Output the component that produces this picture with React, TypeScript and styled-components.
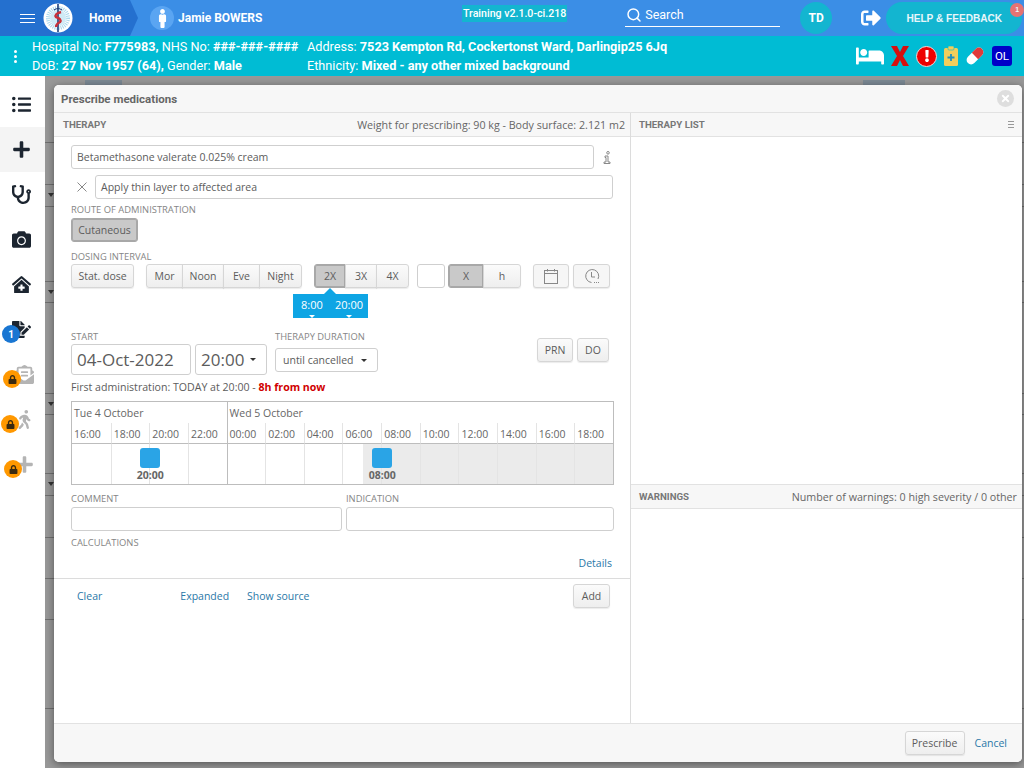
import { createGlobalStyle, styled } from "styled-components";
import { Search } from "lucide-react";
import {
  FaBed,
  FaCamera,
  FaClinicMedical,
  FaEnvelopeOpenText,
  FaExclamation,
  FaFileSignature,
  FaLock,
  FaListUl,
  FaMale,
  FaPlus,
  FaSignOutAlt,
  FaStethoscope,
  FaTimes,
  FaWalking,
} from "react-icons/fa";

const GlobalStyle = createGlobalStyle`
  html, body { margin: 0; padding: 0; }
  body { font-family: "Open Sans", "Liberation Sans", sans-serif; }
  * { box-sizing: border-box; }
`;

const Page = styled.div`
  width: 1024px;
  height: 768px;
  display: flex;
  flex-direction: column;
  overflow: hidden;
`;

const Header = styled.header`
  height: 36px;
  flex: none;
  display: flex;
  align-items: center;
  background: #3b8ee6;
  color: #fff;
  font-family: Roboto, sans-serif;
`;

const HomeCrumb = styled.div`
  height: 36px;
  width: 138px;
  flex: none;
  display: flex;
  align-items: center;
  padding-left: 20px;
  background: #2470cf;
  clip-path: polygon(0 0, 130px 0, 138px 18px, 130px 36px, 0 36px);
  font-size: 12px;
  font-weight: 700;
`;

const Burger = styled.div`
  width: 15px;
  height: 9px;
  flex: none;
  border-top: 1px solid #fff;
  border-bottom: 1px solid #fff;
  position: relative;
  margin-right: 8px;
  &::after {
    content: "";
    position: absolute;
    left: 0;
    right: 0;
    top: 3px;
    border-top: 1px solid #fff;
  }
`;

const HomeLabel = styled.span`
  margin-left: 16px;
`;

const Avatar = styled.div`
  width: 24px;
  height: 24px;
  margin-left: 12px;
  border-radius: 50%;
  background: #5aa5f2;
  display: flex;
  align-items: center;
  justify-content: center;
  font-size: 19px;
`;

const PatientName = styled.div`
  width: 284px;
  margin-left: 4px;
  font-size: 12px;
  font-weight: 700;
`;

const TrainingTag = styled.span`
  align-self: flex-start;
  margin-top: 5px;
  padding: 0 1px;
  background: #13b5d0;
  font-size: 10.6px;
  line-height: 17px;
  font-weight: 500;
`;

const SearchBox = styled.div`
  width: 155px;
  height: 23px;
  margin: 0 0 6px 58px;
  display: flex;
  align-items: center;
  gap: 3px;
  padding-left: 1px;
  border-bottom: 1px solid #fff;
  font-size: 12.5px;
`;

const UserBadge = styled.div`
  width: 32px;
  height: 32px;
  margin-left: 20px;
  border-radius: 50%;
  background: #13b5d0;
  display: flex;
  align-items: center;
  justify-content: center;
  font-size: 12px;
  font-weight: 700;
`;

const LogoutIcon = styled.div`
  margin-left: 29px;
  display: flex;
  font-size: 20px;
`;

const HelpButton = styled.div`
  width: 136px;
  height: 32px;
  margin-left: 5px;
  flex: none;
  position: relative;
  border-radius: 16px;
  background: #13b5d0;
  display: flex;
  align-items: center;
  justify-content: center;
  color: #e8f6fa;
  font-family: "Liberation Sans", sans-serif;
  font-size: 10.1px;
  font-weight: 700;
`;

const HelpCount = styled.span`
  position: absolute;
  top: 1px;
  right: -2px;
  width: 14px;
  height: 14px;
  border-radius: 50%;
  background: #e57373;
  font-size: 7px;
  line-height: 14px;
  text-align: center;
`;

const PatientBar = styled.div`
  height: 40px;
  flex: none;
  display: flex;
  align-items: center;
  background: #00bcd4;
  color: #fff;
  font-family: Roboto, sans-serif;
  font-size: 12.7px;
  line-height: 19px;
`;

const DotsButton = styled.div`
  width: 32px;
  flex: none;
  display: flex;
  flex-direction: column;
  align-items: center;
  gap: 2px;
  padding-right: 2px;
`;

const Dot = styled.span`
  width: 3px;
  height: 3px;
  border-radius: 50%;
  background: #fff;
`;

const InfoColumn = styled.div<{ $width: number }>`
  width: ${({ $width }) => $width}px;
  flex: none;
  white-space: nowrap;
  b { font-weight: 700; }
`;

const StatusIcons = styled.div`
  margin-left: auto;
  padding-right: 12px;
  display: flex;
  align-items: center;
  gap: 7px;
`;

const BedIcon = styled(FaBed)`
  width: 28px;
  height: 24px;
`;

const AlertDot = styled.span`
  width: 21px;
  height: 21px;
  border-radius: 50%;
  background: #ee0000;
  border: 1px solid #f3d7d7;
  display: flex;
  align-items: center;
  justify-content: center;
  font-size: 12px;
`;

const OlBadge = styled.span`
  width: 20px;
  height: 20px;
  border-radius: 3px;
  background: #0000c8;
  font-size: 11.5px;
  line-height: 20px;
  text-align: center;
`;

const Main = styled.div`
  flex: 1;
  display: flex;
  min-height: 0;
`;

const Sidebar = styled.nav`
  width: 45px;
  flex: none;
  display: flex;
  flex-direction: column;
  padding-top: 6px;
  background: #fff;
  color: #1c2530;
`;

const SideItem = styled.div<{ $active?: boolean; $dim?: boolean }>`
  height: 45px;
  flex: none;
  position: relative;
  display: flex;
  align-items: center;
  justify-content: center;
  padding-right: 3px;
  font-size: 19px;
  background: ${({ $active }) => ($active ? "#f4f4f4" : "transparent")};
  color: ${({ $dim }) => ($dim ? "#b4b4b4" : "#1c2530")};
`;

const DimIcon = styled.span`
  display: flex;
  margin-left: 7px;
`;

const SideBadge = styled.span<{ $left: number; $lock?: boolean }>`
  position: absolute;
  left: ${({ $left }) => $left}px;
  top: 18px;
  width: 18px;
  height: 18px;
  border-radius: 50%;
  background: ${({ $lock }) => ($lock ? "#ff9800" : "#1976d2")};
  color: ${({ $lock }) => ($lock ? "#3a2a10" : "#fff")};
  display: flex;
  align-items: center;
  justify-content: center;
  font-family: Roboto, sans-serif;
  font-size: ${({ $lock }) => ($lock ? 9 : 10)}px;
  font-weight: 700;
`;

const Backdrop = styled.div`
  flex: 1;
  position: relative;
  background: #989898;
  padding-top: 4px;
`;

const GhostTabs = styled.div`
  height: 57px;
  display: flex;
  align-items: flex-start;
`;

const GhostTab = styled.span<{ $left: number; $width: number }>`
  width: ${({ $width }) => $width}px;
  height: 12px;
  margin-left: ${({ $left }) => $left}px;
  background: #7c8994;
`;

const GhostRow = styled.div<{ $height: number; $caret?: boolean }>`
  height: ${({ $height }) => $height}px;
  border-bottom: 1px solid #6f6f6f;
  position: relative;
  &::after {
    content: "";
    display: ${({ $caret }) => ($caret ? "block" : "none")};
    position: absolute;
    left: 3px;
    bottom: -16px;
    border: 3px solid transparent;
    border-top: 4px solid #333;
  }
`;

const Modal = styled.section`
  position: absolute;
  left: 9px;
  top: 9px;
  right: 2px;
  bottom: 6px;
  display: flex;
  flex-direction: column;
  border-radius: 5px;
  background: #fff;
  box-shadow: 0 2px 8px rgba(0, 0, 0, 0.45);
  color: #5c5c5c;
  font-size: 11px;
  overflow: hidden;
`;

const ModalTitle = styled.div`
  height: 28px;
  flex: none;
  display: flex;
  align-items: center;
  justify-content: space-between;
  padding: 0 8px 0 7px;
  background: #f7f7f7;
  border-bottom: 1px solid #e2e2e2;
  font-family: Roboto, sans-serif;
  font-size: 11.5px;
  font-weight: 700;
  color: #666;
`;

const CloseDot = styled.span`
  width: 17px;
  height: 17px;
  border-radius: 50%;
  background: #dedede;
  color: #fff;
  display: flex;
  align-items: center;
  justify-content: center;
  font-size: 11px;
`;

const ModalBody = styled.div`
  flex: 1;
  min-height: 0;
  display: grid;
  grid-template-columns: 577px 1fr;
`;

const LeftPane = styled.div`
  border-right: 1px solid #dcdcdc;
  display: flex;
  flex-direction: column;
`;

const RightPane = styled.div`
  display: flex;
  flex-direction: column;
`;

const PaneHeader = styled.div`
  height: 24px;
  flex: none;
  display: flex;
  align-items: center;
  justify-content: space-between;
  padding: 0 5px 0 8px;
  background: #f7f7f7;
  border-bottom: 1px solid #e2e2e2;
  font-size: 10.7px;
  color: #666;
`;

const TherapyHeader = styled(PaneHeader)`
  padding-left: 9px;
`;

const PaneTitle = styled.span`
  font-family: Roboto, sans-serif;
  font-size: 9.7px;
  font-weight: 700;
  color: #777;
`;

const Lines = styled.span`
  width: 6px;
  height: 7px;
  margin-right: 3px;
  border-top: 1px solid #999;
  border-bottom: 1px solid #999;
  position: relative;
  &::after {
    content: "";
    position: absolute;
    left: 0;
    right: 0;
    top: 2px;
    border-top: 1px solid #999;
  }
`;

const ListArea = styled.div`
  height: 347px;
  flex: none;
`;

const WarnHeader = styled(PaneHeader)`
  border-top: 1px solid #e2e2e2;
  height: 25px;
`;

const Form = styled.div`
  padding: 8px 17px 0 17px;
  display: flex;
  flex-direction: column;
`;

const Row = styled.div<{ $gap?: number; $top?: number }>`
  display: flex;
  align-items: flex-start;
  gap: ${({ $gap }) => $gap ?? 0}px;
  margin-top: ${({ $top }) => $top ?? 0}px;
`;

const TextField = styled.div<{ $width?: number }>`
  height: 24px;
  width: ${({ $width }) => ($width ? `${$width}px` : "auto")};
  flex: ${({ $width }) => ($width ? "none" : "1")};
  padding: 0 5px;
  border: 1px solid #cfcfcf;
  border-radius: 3px;
  background: #fff;
  font-size: 10.5px;
  line-height: 22px;
  color: #5c5c5c;
`;

const IconSlot = styled.span<{ $width: number; $end?: boolean }>`
  width: ${({ $width }) => $width}px;
  height: 24px;
  flex: none;
  display: flex;
  align-items: center;
  justify-content: ${({ $end }) => ($end ? "flex-end" : "flex-start")};
  padding: ${({ $end }) => ($end ? "0 2px 0 0" : "0 0 0 6px")};
  color: #888;
`;

const Caption = styled.div<{ $top?: number }>`
  margin-top: ${({ $top }) => $top ?? 0}px;
  font-size: 9.4px;
  line-height: 12px;
  color: #858585;
  white-space: nowrap;
`;

const FieldCaption = styled(Caption)`
  margin-bottom: 2px;
`;

const Btn = styled.button<{ $width?: number; $on?: boolean; $flat?: boolean }>`
  height: 24px;
  width: ${({ $width }) => ($width ? `${$width}px` : "auto")};
  flex: none;
  padding: 0;
  border: 1px solid ${({ $on }) => ($on ? "#a8a8a8" : "#d6d6d6")};
  border-radius: 3px;
  background: ${({ $on, $flat }) =>
    $on
      ? "#c9c9c9"
      : $flat
        ? "#f6f6f6"
        : "linear-gradient(#fbfbfb, #eeeeee)"};
  box-shadow: ${({ $on }) => ($on ? "inset 0 0 0 1px #a8a8a8" : "0 1px 1px rgba(0,0,0,0.08)")};
  color: #5c5c5c;
  font-family: inherit;
  font-size: 10.5px;
  display: flex;
  align-items: center;
  justify-content: center;
`;

const BtnGroup = styled.div`
  display: flex;
  flex: none;
  button {
    border-radius: 0;
    margin-left: -1px;
  }
  button:first-child {
    border-radius: 3px 0 0 3px;
    margin-left: 0;
  }
  button:last-child {
    border-radius: 0 3px 3px 0;
  }
`;

const TimePopupRow = styled.div`
  height: 30px;
  padding-left: 222px;
  display: flex;
  align-items: flex-end;
`;

const TimePopup = styled.div`
  width: 75px;
  height: 24px;
  position: relative;
  display: flex;
  justify-content: space-between;
  padding: 0 5px 0 8px;
  background: #0ea5e4;
  color: #fff;
  font-size: 11px;
  line-height: 22px;
  &::before {
    content: "";
    position: absolute;
    left: 31px;
    top: -6px;
    border-left: 6px solid transparent;
    border-right: 6px solid transparent;
    border-bottom: 6px solid #0ea5e4;
  }
`;

const PopupTime = styled.span`
  position: relative;
  &::after {
    content: "";
    position: absolute;
    left: 50%;
    bottom: 0;
    margin-left: -3px;
    border-left: 3px solid transparent;
    border-right: 3px solid transparent;
    border-top: 3px solid #fff;
  }
`;

const StartRow = styled.div`
  margin-top: 13px;
  height: 45px;
  display: flex;
  align-items: flex-start;
`;

const Field = styled.div<{ $left?: number }>`
  margin-left: ${({ $left }) => $left ?? 0}px;
  display: flex;
  flex-direction: column;
  flex: none;
`;

const BigField = styled.div<{ $width: number }>`
  width: ${({ $width }) => $width}px;
  height: 31px;
  margin-top: 1px;
  padding-left: 5px;
  display: flex;
  align-items: center;
  gap: 6px;
  border: 1px solid #cfcfcf;
  border-radius: 3px;
  font-size: 17px;
  color: #5c5c5c;
`;

const SmallCaret = styled.span`
  border-left: 3px solid transparent;
  border-right: 3px solid transparent;
  border-top: 3px solid #333;
`;

const DurationSelect = styled.div`
  width: 103px;
  height: 24px;
  margin-top: 5px;
  padding-left: 7px;
  display: flex;
  align-items: center;
  gap: 7px;
  border: 1px solid #cfcfcf;
  border-radius: 3px;
  font-size: 10.5px;
`;

const RightButtons = styled.div`
  margin: 7px 4px 0 auto;
  display: flex;
  gap: 4px;
`;

const FirstDose = styled.div`
  margin-top: 4px;
  font-size: 10.6px;
  line-height: 14px;
  b { color: #d00000; }
`;

const Timeline = styled.div`
  margin-top: 7px;
  width: 543px;
  height: 84px;
  flex: none;
  border: 1px solid #bdbdbd;
  display: grid;
  grid-template-columns: repeat(14, 1fr);
  grid-template-rows: 21px 21px 1fr;
  font-size: 10.5px;
  color: #666;
`;

const DayCell = styled.div<{ $span: number }>`
  grid-column: span ${({ $span }) => $span};
  padding: 4px 0 0 2px;
  line-height: 14px;
  & + & { border-left: 1px solid #bdbdbd; }
`;

const HourCell = styled.div<{ $first?: boolean }>`
  padding-left: 2px;
  line-height: 23px;
  white-space: nowrap;
  border-bottom: 1px solid #bdbdbd;
  border-left: 1px solid ${({ $first }) => ($first ? "#bdbdbd" : "#e4e4e4")};
  &:nth-of-type(3) { border-left: 0; }
`;

const SlotCell = styled.div<{ $shade?: "half" | "full"; $first?: boolean }>`
  position: relative;
  border-left: 1px solid ${({ $first }) => ($first ? "#bdbdbd" : "#e4e4e4")};
  &:nth-of-type(17) { border-left: 0; }
  background: ${({ $shade }) =>
    $shade === "full"
      ? "#ebebeb"
      : $shade === "half"
        ? "linear-gradient(90deg, transparent 52%, #ebebeb 52%)"
        : "transparent"};
`;

const Dose = styled.div`
  position: absolute;
  left: 0;
  top: 4px;
  width: 40px;
  margin-left: -20px;
  display: flex;
  flex-direction: column;
  align-items: center;
  z-index: 1;
  font-size: 10.5px;
  line-height: 14px;
  font-weight: 700;
  color: #666;
`;

const DoseBlock = styled.span`
  width: 20px;
  height: 20px;
  border-radius: 3px;
  background: #2aa4e6;
`;

const DetailsRow = styled.div`
  margin-top: 7px;
  padding-right: 1px;
  line-height: 14px;
  text-align: right;
`;

const Link = styled.a`
  color: #2a78a8;
  font-size: 10.5px;
  white-space: nowrap;
`;

const ActionBar = styled.div`
  margin-top: 8px;
  height: 38px;
  padding: 0 20px 3px 23px;
  border-top: 1px solid #dcdcdc;
  display: flex;
  align-items: center;
`;

const AddWrap = styled.div`
  margin-left: auto;
`;

const Footer = styled.div`
  height: 39px;
  flex: none;
  display: flex;
  align-items: center;
  justify-content: flex-end;
  gap: 10px;
  padding-right: 15px;
  background: #f7f7f7;
  border-top: 1px solid #e2e2e2;
`;

const Spacer = styled.span<{ $width: number }>`
  width: ${({ $width }) => $width}px;
  flex: none;
`;

const days = [
  { label: "Tue 4 October", span: 4 },
  { label: "Wed 5 October", span: 10 },
];
const hours = ["16:00", "18:00", "20:00", "22:00", "00:00", "02:00", "04:00", "06:00", "08:00", "10:00", "12:00", "14:00", "16:00", "18:00"];
const ghostRows = [
  { height: 6 },
  { height: 42, caret: true },
  { height: 22 },
  { height: 75, caret: true },
  { height: 21 },
  { height: 91, caret: true },
  { height: 21 },
  { height: 59, caret: true },
  { height: 22 },
  { height: 42 },
  { height: 41 },
  { height: 41 },
  { height: 89 },
];

const Logo = () => (
  <svg width="30" height="30" viewBox="0 0 30 30">
    <circle cx="15" cy="15" r="14.5" fill="#fff" />
    <circle cx="15" cy="15" r="10" fill="none" stroke="#a9d8ec" strokeWidth="4" strokeDasharray="1 1" />
    <circle cx="15" cy="15" r="8" fill="#cfeaf5" />
    <path d="M15 1V29" stroke="#1e3f7a" strokeWidth="1.6" />
    <path d="M11 7Q15 4 19 7" stroke="#1e3f7a" strokeWidth="1.2" fill="none" />
    <path d="M18 9Q11 11 13 14Q19 16 17 19Q13 21 13 24" stroke="#c8313a" strokeWidth="2.4" fill="none" />
  </svg>
);

const HeavyX = () => (
  <svg width="18" height="20" viewBox="0 0 18 20">
    <path d="M0 0H6L9 6L12 0H18L12 10L18 20H12L9 14L6 20H0L6 10Z" fill="#d50f0f" />
  </svg>
);

const ClipboardPlus = () => (
  <svg width="14" height="20" viewBox="0 0 14 20">
    <rect x="0" y="2" width="14" height="18" rx="1.5" fill="#f2ce5c" />
    <rect x="4" y="0" width="6" height="4" rx="1" fill="#f2ce5c" stroke="#00bcd4" strokeWidth="0.6" />
    <path d="M7 8V15M3.5 11.5H10.5" stroke="#1f8fc0" strokeWidth="1.8" />
  </svg>
);

const Capsule = () => (
  <svg width="20" height="20" viewBox="0 0 20 20">
    <g transform="rotate(-45 10 10)">
      <rect x="0" y="5.5" width="20" height="9" rx="4.5" fill="#fff" />
      <path d="M10 5.5H15.5A4.5 4.5 0 0 1 15.5 14.5H10Z" fill="#e03a3a" />
    </g>
  </svg>
);

const CalendarGlyph = () => (
  <svg width="16" height="16" viewBox="0 0 16 16" fill="none" stroke="#888">
    <rect x="1.5" y="2.5" width="13" height="13" />
    <path d="M1.5 5.5H14.5M4.5 1V3.5M11.5 1V3.5" />
  </svg>
);

const ClockGlyph = () => (
  <svg width="16" height="16" viewBox="0 0 16 16" fill="none" stroke="#888">
    <path d="M14 11A6.5 6.5 0 1 0 7.5 14.5" />
    <path d="M7.5 4V9H11" />
    <path d="M10 14.5H15" strokeDasharray="1 1" />
  </svg>
);

const InfoGlyph = () => (
  <svg width="8" height="13" viewBox="0 0 8 13" fill="none" stroke="#888">
    <circle cx="5" cy="1.8" r="1.3" />
    <path d="M2 5H5V11H7V12.5H1V11H3V6.5H2Z" />
  </svg>
);

const CrossGlyph = () => (
  <svg width="10" height="10" viewBox="0 0 10 10" stroke="#888" strokeWidth="1">
    <path d="M0.5 0.5L9.5 9.5M9.5 0.5L0.5 9.5" />
  </svg>
);

export default function App() {
  return (
    <Page>
      <GlobalStyle />
      <Header>
        <HomeCrumb>
          <Burger />
          <Logo />
          <HomeLabel>Home</HomeLabel>
        </HomeCrumb>
        <Avatar>
          <FaMale />
        </Avatar>
        <PatientName>Jamie BOWERS</PatientName>
        <TrainingTag>Training v2.1.0-ci.218</TrainingTag>
        <SearchBox>
          <Search size={16} strokeWidth={2.2} />
          Search
        </SearchBox>
        <UserBadge>TD</UserBadge>
        <LogoutIcon>
          <FaSignOutAlt />
        </LogoutIcon>
        <HelpButton>
          HELP &amp; FEEDBACK
          <HelpCount>1</HelpCount>
        </HelpButton>
      </Header>

      <PatientBar>
        <DotsButton>
          <Dot />
          <Dot />
          <Dot />
        </DotsButton>
        <InfoColumn $width={275}>
          Hospital No: <b>F775983,</b> NHS No: <b>###-###-####</b>
          <br />
          DoB: <b>27 Nov 1957 (64),</b> Gender: <b>Male</b>
        </InfoColumn>
        <InfoColumn $width={400}>
          Address: <b>7523 Kempton Rd, Cockertonst Ward, Darlingip25 6Jq</b>
          <br />
          Ethnicity: <b>Mixed - any other mixed background</b>
        </InfoColumn>
        <StatusIcons>
          <BedIcon />
          <HeavyX />
          <AlertDot>
            <FaExclamation />
          </AlertDot>
          <ClipboardPlus />
          <Capsule />
          <OlBadge>OL</OlBadge>
        </StatusIcons>
      </PatientBar>

      <Main>
        <Sidebar>
          <SideItem>
            <FaListUl />
          </SideItem>
          <SideItem $active>
            <FaPlus />
          </SideItem>
          <SideItem>
            <FaStethoscope />
          </SideItem>
          <SideItem>
            <FaCamera />
          </SideItem>
          <SideItem>
            <FaClinicMedical />
          </SideItem>
          <SideItem>
            <FaFileSignature />
            <SideBadge $left={2}>1</SideBadge>
          </SideItem>
          <SideItem $dim>
            <DimIcon>
              <FaEnvelopeOpenText />
            </DimIcon>
            <SideBadge $left={3} $lock>
              <FaLock />
            </SideBadge>
          </SideItem>
          <SideItem $dim>
            <DimIcon>
              <FaWalking />
            </DimIcon>
            <SideBadge $left={1} $lock>
              <FaLock />
            </SideBadge>
          </SideItem>
          <SideItem $dim>
            <DimIcon>
              <FaPlus />
            </DimIcon>
            <SideBadge $left={4} $lock>
              <FaLock />
            </SideBadge>
          </SideItem>
        </Sidebar>

        <Backdrop>
          <GhostTabs>
            <GhostTab $left={40} $width={37} />
            <GhostTab $left={741} $width={42} />
          </GhostTabs>
          {ghostRows.map((row, i) => (
            <GhostRow key={i} $height={row.height} $caret={row.caret} />
          ))}

          <Modal>
            <ModalTitle>
              Prescribe medications
              <CloseDot>
                <FaTimes />
              </CloseDot>
            </ModalTitle>
            <ModalBody>
              <LeftPane>
                <TherapyHeader>
                  <PaneTitle>THERAPY</PaneTitle>
                  Weight for prescribing: 90 kg - Body surface: 2.121 m2
                </TherapyHeader>
                <Form>
                  <Row>
                    <TextField>Betamethasone valerate 0.025% cream</TextField>
                    <IconSlot $width={19} $end>
                      <InfoGlyph />
                    </IconSlot>
                  </Row>
                  <Row $top={6}>
                    <IconSlot $width={24}>
                      <CrossGlyph />
                    </IconSlot>
                    <TextField>Apply thin layer to affected area</TextField>
                  </Row>
                  <Caption $top={5}>ROUTE OF ADMINISTRATION</Caption>
                  <Row $top={2}>
                    <Btn $on $width={67}>Cutaneous</Btn>
                  </Row>
                  <Caption $top={9}>DOSING INTERVAL</Caption>
                  <Row $top={1}>
                    <Btn $width={63}>Stat. dose</Btn>
                    <Spacer $width={12} />
                    <BtnGroup>
                      <Btn $width={37}>Mor</Btn>
                      <Btn $width={42}>Noon</Btn>
                      <Btn $width={37}>Eve</Btn>
                      <Btn $width={43}>Night</Btn>
                    </BtnGroup>
                    <Spacer $width={12} />
                    <BtnGroup>
                      <Btn $on $width={32}>2X</Btn>
                      <Btn $width={32}>3X</Btn>
                      <Btn $width={33}>4X</Btn>
                    </BtnGroup>
                    <Spacer $width={8} />
                    <TextField $width={28} />
                    <Spacer $width={3} />
                    <BtnGroup>
                      <Btn $on $width={36}>X</Btn>
                      <Btn $width={38}>h</Btn>
                    </BtnGroup>
                    <Spacer $width={12} />
                    <Btn $flat $width={36}>
                      <CalendarGlyph />
                    </Btn>
                    <Spacer $width={4} />
                    <Btn $flat $width={37}>
                      <ClockGlyph />
                    </Btn>
                  </Row>
                  <TimePopupRow>
                    <TimePopup>
                      <PopupTime>8:00</PopupTime>
                      <PopupTime>20:00</PopupTime>
                    </TimePopup>
                  </TimePopupRow>
                  <StartRow>
                    <Field>
                      <Caption>START</Caption>
                      <BigField $width={120}>04-Oct-2022</BigField>
                    </Field>
                    <Field $left={4}>
                      <Caption>&nbsp;</Caption>
                      <BigField $width={72}>
                        20:00 <SmallCaret />
                      </BigField>
                    </Field>
                    <Field $left={8}>
                      <Caption>THERAPY DURATION</Caption>
                      <DurationSelect>
                        until cancelled <SmallCaret />
                      </DurationSelect>
                    </Field>
                    <RightButtons>
                      <Btn $width={36}>PRN</Btn>
                      <Btn $width={32}>DO</Btn>
                    </RightButtons>
                  </StartRow>
                  <FirstDose>
                    First administration: TODAY at 20:00 - <b>8h from now</b>
                  </FirstDose>
                  <Timeline>
                    {days.map((d) => (
                      <DayCell key={d.label} $span={d.span}>
                        {d.label}
                      </DayCell>
                    ))}
                    {hours.map((h, i) => (
                      <HourCell key={i} $first={i === 4}>
                        {h}
                      </HourCell>
                    ))}
                    {hours.map((h, i) => (
                      <SlotCell
                        key={i}
                        $first={i === 4}
                        $shade={i === 7 ? "half" : i > 7 ? "full" : undefined}
                      >
                        {(i === 2 || i === 8) && (
                          <Dose>
                            <DoseBlock />
                            {h}
                          </Dose>
                        )}
                      </SlotCell>
                    ))}
                  </Timeline>
                  <Row $gap={4} $top={8}>
                    <Field>
                      <FieldCaption>COMMENT</FieldCaption>
                      <TextField $width={271} />
                    </Field>
                    <Field>
                      <FieldCaption>INDICATION</FieldCaption>
                      <TextField $width={268} />
                    </Field>
                  </Row>
                  <Caption $top={6}>CALCULATIONS</Caption>
                  <DetailsRow>
                    <Link>Details</Link>
                  </DetailsRow>
                </Form>
                <ActionBar>
                  <Link>Clear</Link>
                  <Spacer $width={78} />
                  <Link>Expanded</Link>
                  <Spacer $width={18} />
                  <Link>Show source</Link>
                  <AddWrap>
                    <Btn $width={37}>Add</Btn>
                  </AddWrap>
                </ActionBar>
              </LeftPane>
              <RightPane>
                <PaneHeader>
                  <PaneTitle>THERAPY LIST</PaneTitle>
                  <Lines />
                </PaneHeader>
                <ListArea />
                <WarnHeader>
                  <PaneTitle>WARNINGS</PaneTitle>
                  Number of warnings: 0 high severity / 0 other
                </WarnHeader>
              </RightPane>
            </ModalBody>
            <Footer>
              <Btn $width={60}>Prescribe</Btn>
              <Link>Cancel</Link>
            </Footer>
          </Modal>
        </Backdrop>
      </Main>
    </Page>
  );
}
